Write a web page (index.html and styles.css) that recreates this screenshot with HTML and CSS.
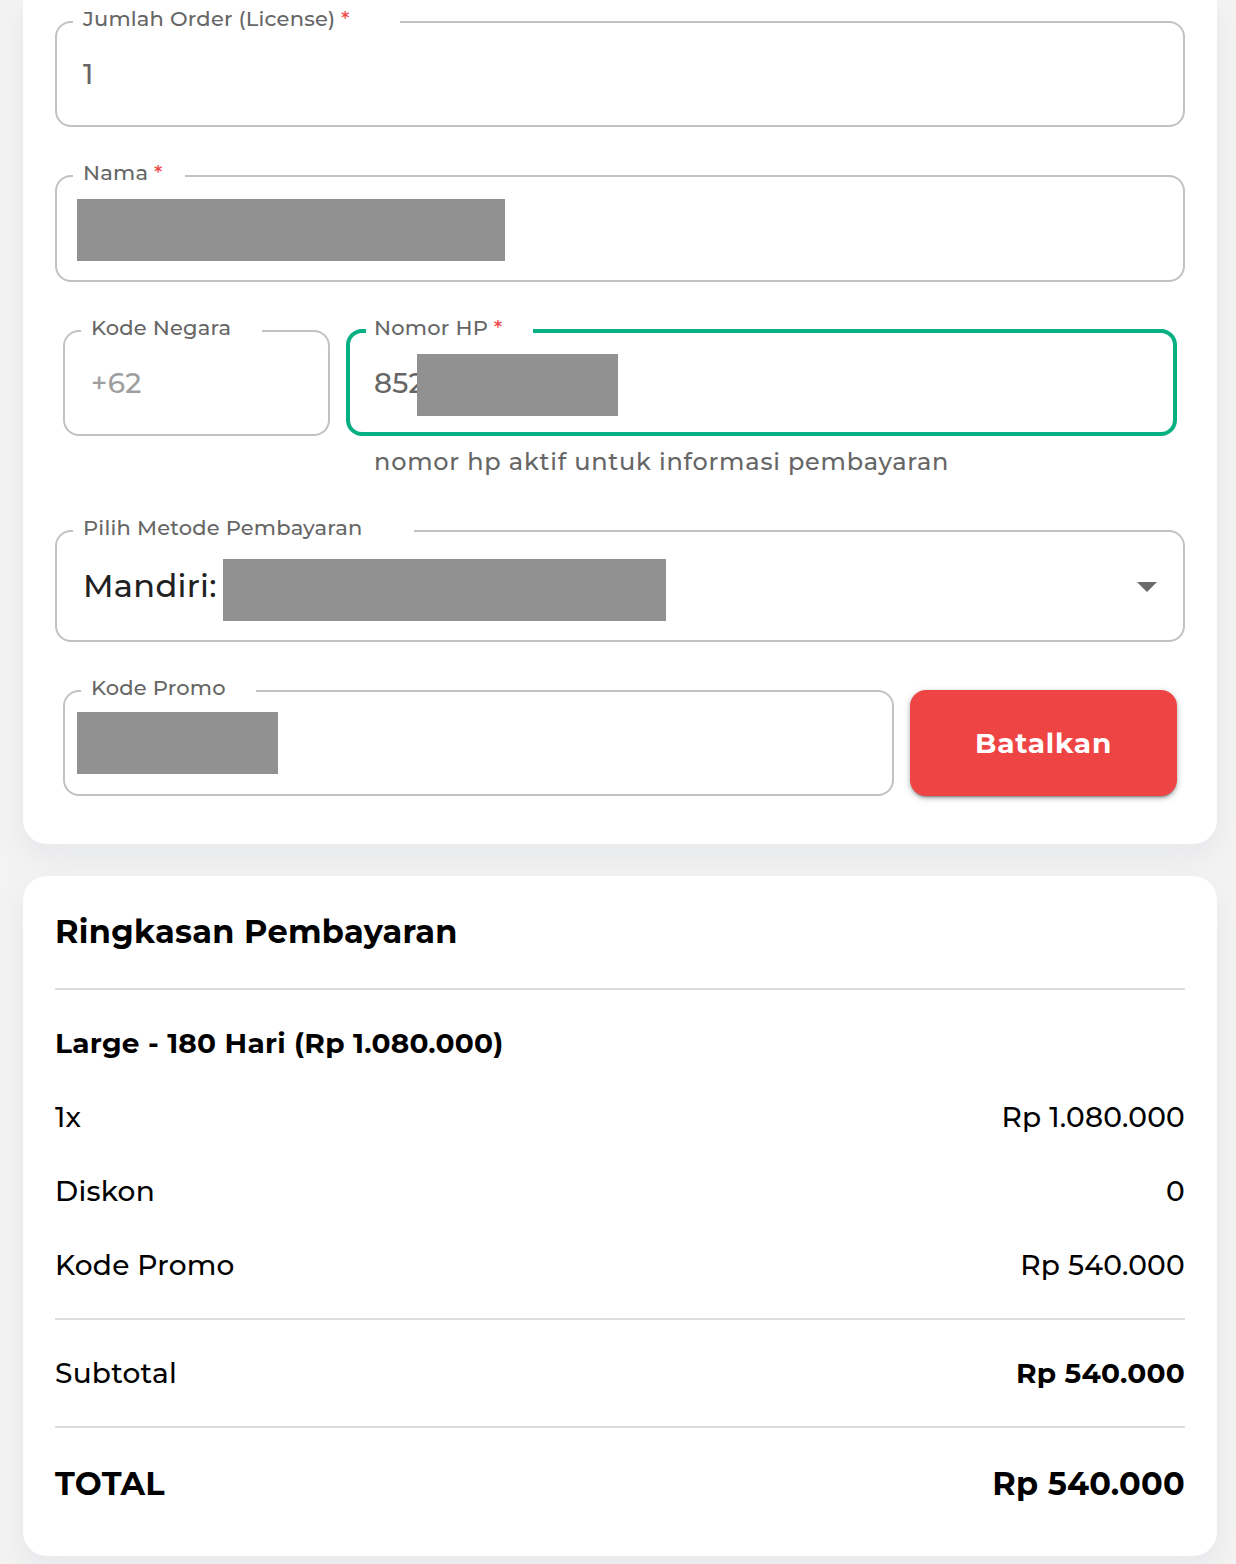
FILE: index.html
```
<!DOCTYPE html>
<html lang="id">
<head>
    <meta charset="UTF-8">
    <meta name="viewport" content="width=device-width, initial-scale=1.0">
    <title>Ringkasan Pembayaran</title>
    <link rel="stylesheet" href="styles.css">
</head>
<body>
    <div class="card form">
        <div class="field field-order">
            <label>Jumlah Order (License) <span class="required">*</span></label>
            <span class="value">1</span>
        </div>

        <div class="field field-name">
            <label>Nama <span class="required">*</span></label>
            <span class="redacted redacted-name"></span>
        </div>

        <div class="phone">
            <div class="form-row">
                <div class="field field-country">
                    <label>Kode Negara</label>
                    <span class="value disabled">+62</span>
                </div>
                <div class="field field-phone focused">
                    <label>Nomor HP <span class="required">*</span></label>
                    <span class="value">852</span>
                    <span class="redacted redacted-phone"></span>
                </div>
            </div>
            <p class="helper">nomor hp aktif untuk informasi pembayaran</p>
        </div>

        <div class="field field-method">
            <label>Pilih Metode Pembayaran</label>
            <span class="value selected">Mandiri:</span>
            <span class="redacted redacted-method"></span>
            <svg class="arrow" width="20" height="10" viewBox="0 0 20 10">
                <path d="M0 0h20L10 10z" fill="#6b6b6b"/>
            </svg>
        </div>

        <div class="form-row">
            <div class="field field-promo">
                <label>Kode Promo</label>
                <span class="redacted redacted-promo"></span>
            </div>
            <button class="cancel">Batalkan</button>
        </div>
    </div>

    <div class="card summary">
        <h2>Ringkasan Pembayaran</h2>
        <hr>
        <h3>Large - 180 Hari (Rp 1.080.000)</h3>
        <div class="row">
            <span>1x</span>
            <span>Rp 1.080.000</span>
        </div>
        <div class="row">
            <span>Diskon</span>
            <span>0</span>
        </div>
        <div class="row">
            <span>Kode Promo</span>
            <span>Rp 540.000</span>
        </div>
        <hr>
        <div class="row">
            <span>Subtotal</span>
            <span class="bold">Rp 540.000</span>
        </div>
        <hr>
        <div class="row total">
            <span>TOTAL</span>
            <span>Rp 540.000</span>
        </div>
    </div>
</body>
</html>
```
FILE: styles.css
```
* {
    box-sizing: border-box;
    margin: 0;
    padding: 0;
}

body {
    font-family: Montserrat, Inter, sans-serif;
    font-weight: 500;
    display: flex;
    flex-direction: column;
    gap: 32px;
    height: 1564px;
    padding: 0 19px 0 23px;
    background-color: #f3f3f3;
    color: #000;
    overflow: hidden;
}

.card {
    flex-shrink: 0;
    display: flex;
    flex-direction: column;
    padding: 32px 32px 48px;
    background: #fff;
    border-radius: 24px;
    box-shadow: 0 12px 28px rgba(145, 158, 180, 0.13);
}

/* form */

.form {
    gap: 48px;
    padding-top: 21px;
    border-radius: 0 0 24px 24px;
}

.form-row {
    display: flex;
    align-items: flex-end;
    gap: 16px;
    padding: 0 8px;
}

.field {
    position: relative;
    display: flex;
    align-items: center;
    height: 106px;
    padding: 0 26px;
    border: 2px solid #c2c2c2;
    border-radius: 16px;
}

/* the label covers the border to make the notch */
.field label {
    position: absolute;
    top: -16px;
    left: 16px;
    padding-left: 10px;
    font-size: 21px;
    line-height: 24px;
    letter-spacing: 0.2px;
    white-space: nowrap;
    color: #666;
    background: #fff;
}

.required {
    color: #ef4444;
}

.value {
    font-size: 28px;
    letter-spacing: 0.26px;
    color: #666;
}

.value.disabled {
    color: #9e9e9e;
}

.value.selected {
    width: 140px;
    margin-top: -2px;
    font-size: 32px;
    letter-spacing: 0.3px;
    color: #212121;
}

.redacted {
    height: 62px;
    background: #919191;
}

.field-order label {
    width: 327px;
}

.field-name {
    height: 107px;
    padding-left: 20px;
}

.field-name label {
    width: 112px;
}

.redacted-name {
    width: 428px;
    margin-top: 2px;
}

.field-country {
    width: 267px;
}

.field-country label {
    width: 181px;
}

.field-phone {
    flex: 1;
    height: 107px;
    margin-top: -1px;
    padding: 0 24px;
}

.field-phone label {
    top: -17px;
    width: 167px;
    padding-left: 8px;
}

.field.focused {
    border: 4px solid #07b083;
}

.redacted-phone {
    position: absolute;
    top: 21px;
    left: 67px;
    width: 201px;
}

.helper {
    height: 46px;
    padding: 6px 0 0 319px;
    font-size: 24px;
    line-height: 40px;
    letter-spacing: 0.79px;
    color: #666;
}

.field-method {
    height: 112px;
}

.field-method label {
    width: 341px;
}

.redacted-method {
    width: 443px;
    margin-top: 8px;
}

.arrow {
    margin: 2px 0 0 auto;
}

.field-promo {
    flex: 1;
    padding-left: 12px;
}

.field-promo label {
    width: 175px;
}

.redacted-promo {
    width: 201px;
}

.cancel {
    width: 267px;
    height: 106px;
    font-family: inherit;
    font-size: 28px;
    font-weight: 700;
    letter-spacing: 0.8px;
    color: #fff;
    background: #ef4444;
    border: none;
    border-radius: 16px;
    cursor: pointer;
    box-shadow: 0 3px 2px -2px rgba(0, 0, 0, 0.3), 0 2px 4px rgba(0, 0, 0, 0.25), 0 2px 8px rgba(0, 0, 0, 0.12);
}

/* summary */

.summary {
    gap: 32px;
}

.summary hr {
    height: 2px;
    border: none;
    background: #dedede;
}

.summary h2 {
    font-size: 32px;
    line-height: 48px;
    letter-spacing: 0.3px;
}

.summary h3 {
    font-size: 28px;
    line-height: 42px;
    letter-spacing: 0.26px;
}

.row {
    display: flex;
    justify-content: space-between;
    font-size: 28px;
    line-height: 42px;
    letter-spacing: 0.26px;
}

.bold {
    font-weight: 700;
}

.total {
    font-size: 32px;
    font-weight: 700;
    line-height: 48px;
}
```
